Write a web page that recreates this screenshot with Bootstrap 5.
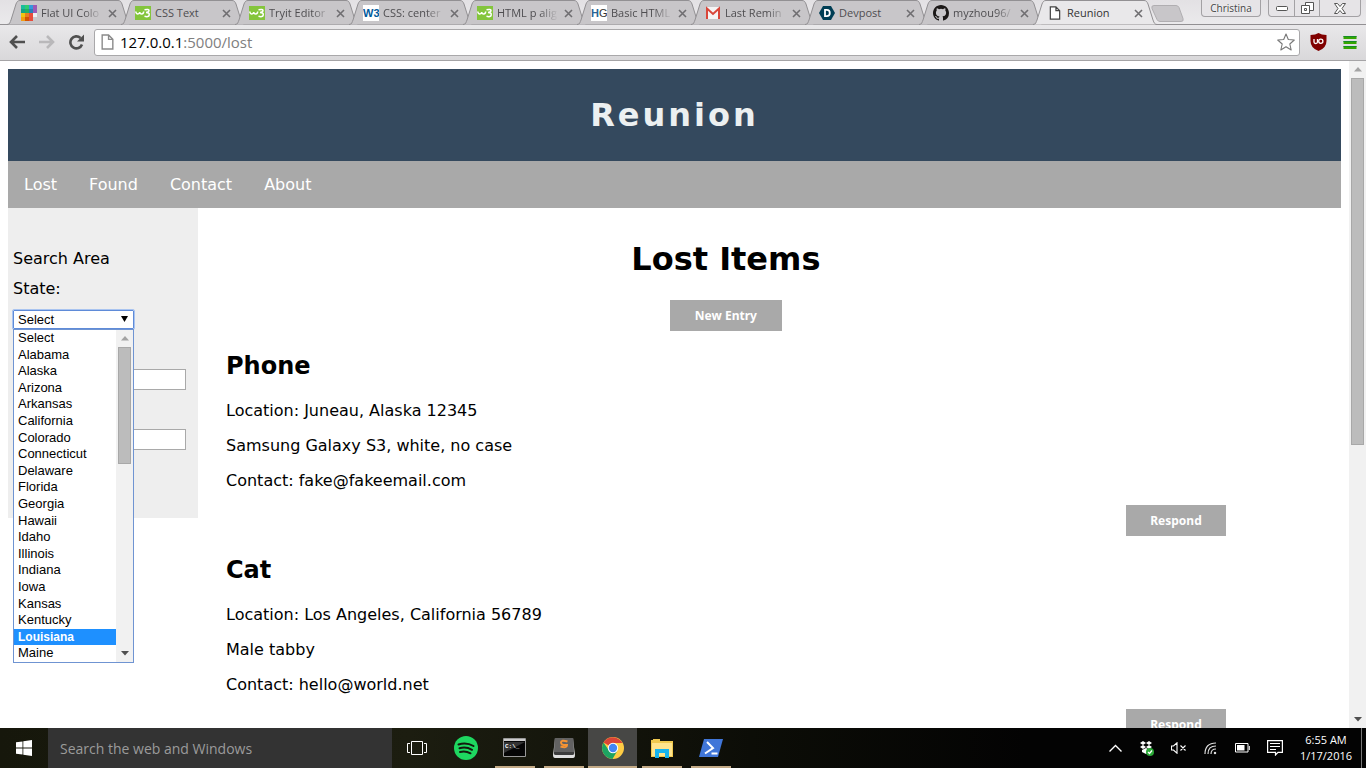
<!DOCTYPE html>
<html lang="en">
<head>
<meta charset="utf-8">
<meta name="viewport" content="width=device-width, initial-scale=1">
<title>Reunion</title>
<link rel="stylesheet" href="https://cdn.jsdelivr.net/npm/bootstrap@5.3.0/dist/css/bootstrap.min.css">
<style>
  :root { --ui: "Open Sans", "Noto Sans", sans-serif; --line: #929093; }
  body { font-family: "DejaVu Sans", sans-serif; font-size: 16px; line-height: 19px; color: #000; background: #fff; }
  button { border: 0; padding: 0; background: none; color: inherit; }
  svg { display: block; flex: none; }

  /* Browser window */
  .tab-strip { height: 25px; padding-left: 7px; background: linear-gradient(#e3e1e4, #ebeaec); font-family: var(--ui); font-size: 11px; line-height: 16px; box-shadow: inset 0 -1px var(--line); }
  .browser-tab { flex: 0 1 124px; height: 25px; min-width: 0; margin-right: -10px; padding: 1px 14px 0 14px; color: #4e4d50; isolation: isolate; }
  .browser-tab .shape { position: absolute; inset: 0; width: 100%; height: 25px; z-index: -1; fill: #c8c6c9; stroke: var(--line); }
  .browser-tab.current { z-index: 2; color: #333; }
  .browser-tab.current .shape { fill: #e9e8ea; }
  .tab-title { flex: 1 1 0; min-width: 0; margin-left: 4px; overflow: hidden; white-space: nowrap; -webkit-mask-image: linear-gradient(90deg, #000 70%, transparent); mask-image: linear-gradient(90deg, #000 70%, transparent); }
  .current .tab-title, .tab-title.whole { -webkit-mask-image: none; mask-image: none; }
  .tab-close { margin-left: 6px; color: #6f6e71; }
  .new-tab { margin: 5px 0 0 4px; align-self: flex-start; }
  .caption-group { height: 17px; border: 1px solid #a3a1a4; border-top: 0; border-radius: 0 0 4px 4px; background: #e6e4e7; }
  .window-buttons { margin: 0 5px 0 7px; }
  .caption-group button { display: flex; align-items: center; justify-content: center; width: 25px; color: #555; }
  .caption-group button + button { border-left: 1px solid #a3a1a4; }
  .caption-group button:last-child { width: 41px; }
  .profile-btn { width: 60px; font-size: 10px; line-height: 15px; color: #444; text-shadow: 0 0 2px #fff; }
  .toolbar { height: 36px; padding: 0 9px 1px 8px; background: linear-gradient(#e9e8ea, #d9d8da); border-bottom: 1px solid #a5a4a6; }
  .omnibox { height: 27px; margin-right: 10px; padding: 0 4px 0 6px; border: 1px solid #a9a8aa; border-radius: 3px; background: #fff; }
  .address { position: relative; height: 25px; margin-left: 6px; font-family: var(--ui); font-size: 15px; line-height: 25px; color: #808080; }
  .address b { font-weight: 400; color: #000; }

  .scroll-track { flex: none; width: 17px; padding: 17px 2px; background: #f1f1f1; }
  .scroll-track .thumb { height: 58%; border: 1px solid #a8a8a8; background: #bcbcbc; }
  .scroll-track .up, .scroll-track .down { position: absolute; left: 5px; }
  .scroll-track .up { top: 6px; } .scroll-track .down { bottom: 6px; }

  /* Reunion page */
  .site { padding: 8px 8px 0; }
  .banner { padding: 27px 0 26px; background: #34495e; }
  .banner h1 { margin: 0; font-size: 32px; line-height: 39px; font-weight: 700; letter-spacing: 3px; color: #ecf0f1; }
  .site-nav { background: #a9a9a9; }
  .site-nav a { padding: 14px 16px; color: #fff; text-decoration: none; }
  .search-area { flex: none; width: 190px; height: 310px; padding: 41px 5px 0; background: #eee; }
  .search-area p { margin: 0 0 11px; }
  .search-area label { display: block; margin: 0 0 12px; }
  .state-picker { width: 121px; height: 20px; }
  .plain-select { appearance: none; display: block; width: 100%; height: 19px; padding: 0 4px; border: 1px solid #5f8bd8; border-radius: 1px; outline: 1px solid #a9c4f0; background: #fff; font: 13px/17px "Liberation Sans", sans-serif; color: #000; }
  .picker-arrow { position: absolute; right: 6px; top: 6px; pointer-events: none; }
  .state-menu { position: absolute; top: 19px; left: 0; z-index: 5; width: 100%; height: 334px; border: 1px solid #6f94d2; background: #fff; font: 13px/16px "Liberation Sans", sans-serif; }
  .state-menu ul { display: grid; grid-auto-rows: 1fr; flex: 1; }
  .state-menu li { padding-left: 4px; }
  .state-menu li.chosen { background: #1e90ff; color: #fff; font-size: 12px; font-weight: 700; }
  .state-menu .thumb { height: 117px; }
  .plain-input { display: block; width: 173px; height: 21px; margin-top: 39px; padding: 1px 3px; border: 1px solid #a9a9a9; background: #fff; font-size: 13px; }
  .listing { width: 75%; margin-left: 28px; padding-top: 32px; }
  .listing h2 { margin: 0 0 21px; font-size: 32px; line-height: 39px; font-weight: 700; text-align: center; }
  .listing-actions { margin-bottom: 21px; }
  .gray-btn { height: 31px; padding: 0 24px; background: #a9a9a9; color: #fff; font-size: 12px; line-height: 31px; font-weight: 700; font-family: "Noto Sans", sans-serif; }
  .listing-actions .gray-btn { padding: 0 25px; }
  .entry + .entry { margin-top: 20px; }
  .entry h3 { margin: 0 0 20px; font-size: 24px; line-height: 29px; font-weight: 700; }
  .entry p { margin: 0 0 16px; }
  .entry p:last-of-type { margin-bottom: 15px; }

  /* Desktop taskbar */
  .taskbar { flex: none; height: 40px; background: linear-gradient(90deg, #16170b, #1c1d10 30%, #0c0d07 55%, #030303 75%); color: #fff; font-family: var(--ui); }
  .start-btn { width: 48px; }
  .desk-search { width: 344px; min-width: 0; padding: 0 12px; border: 0; border-radius: 0; background: #333; color: #fff; font-size: 14px; }
  .desk-search::placeholder { color: #9b9b9b; opacity: 1; }
  .task-btn { display: flex; position: relative; align-items: center; justify-content: center; width: 49px; }
  .task-btn.open::after { content: ""; position: absolute; left: 5px; right: 4px; bottom: 0; height: 2px; background: #c3aa86; }
  .task-btn.front { background: #474745; }
  .task-btn.front::after { left: 0; right: 0; }
  .tray { gap: 17px; }
  .clock { width: 62px; margin-right: 4px; font-size: 11px; line-height: 16px; }
  .show-desktop { width: 5px; border-left: 1px solid #777; }
</style>
</head>
<body class="vh-100 d-flex flex-column overflow-hidden">

<svg width="0" height="0" class="position-absolute" aria-hidden="true">
  <symbol id="tab-shape" viewBox="0 0 124 25" preserveAspectRatio="none"><path d="M0 24.500C3 24.500 3 22 4 20L9 4C10 1.500 11 .5 13 .5H111C113 .5 114 1.500 115 4L120 20C121 23 122 24.500 124 24.500"/></symbol>
  <symbol id="x" viewBox="0 0 9 9"><path d="M1 1l7 7M8 1l-7 7" stroke="currentColor" stroke-width="1.600"/></symbol>
  <symbol id="w3s" viewBox="0 0 16 16"><rect y="1" width="16" height="14" fill="#84c53c"/><path d="M.8 6.500q.3 2.500 2 2.500T4.700 7q.2 2 2 2t2-2.500M9.500 4.800q4.500-1 4.500.7t-3 2q3.700 0 3.200 2.500t-4.700 1.300" fill="none" stroke="#fff" stroke-width="1.500"/></symbol>
  <symbol id="page" viewBox="0 0 12 15"><path d="M1 1h6l4 4v9H1zM7 1v4h4" fill="#fff" stroke="currentColor" stroke-width="1.300"/></symbol>
  <symbol id="tri-up" viewBox="0 0 8 5"><path d="M4 0l4 4.500H0z" fill="#a3a3a3"/></symbol>
  <symbol id="tri-down" viewBox="0 0 8 5"><path d="M0 0h8L4 4.500z" fill="#505050"/></symbol>
</svg>

<header class="flex-shrink-0">
  <div class="tab-strip d-flex">
    <div class="browser-tab position-relative d-flex align-items-center"><svg class="shape"><use href="#tab-shape"/></svg>
      <svg width="16" height="16" viewBox="0 0 16 16"><path fill="#1abc9c" d="M0 0h4v4H0z"/><path fill="#2ecc71" d="M4 0h4v4H4z"/><path fill="#3498db" d="M8 0h4v4H8z"/><path fill="#9b59b6" d="M12 0h4v8h-4z"/><path fill="#16a085" d="M0 4h4v4H0z"/><path fill="#27ae60" d="M4 4h4v4H4z"/><path fill="#2980b9" d="M8 4h4v4H8z"/><path fill="#f1c40f" d="M0 8h4v4H0z"/><path fill="#e67e22" d="M4 8h4v4H4z"/><path fill="#e74c3c" d="M8 8h4v8H8z"/><path fill="#ecf0f1" d="M12 8h4v4h-4z"/><path fill="#f39c12" d="M0 12h4v4H0z"/><path fill="#d35400" d="M4 12h4v4H4z"/></svg>
      <span class="tab-title">Flat UI Colo</span><button class="tab-close" aria-label="Close"><svg width="9" height="9"><use href="#x"/></svg></button></div>
    <div class="browser-tab position-relative d-flex align-items-center"><svg class="shape"><use href="#tab-shape"/></svg>
      <svg width="16" height="16"><use href="#w3s"/></svg>
      <span class="tab-title whole">CSS Text</span><button class="tab-close" aria-label="Close"><svg width="9" height="9"><use href="#x"/></svg></button></div>
    <div class="browser-tab position-relative d-flex align-items-center"><svg class="shape"><use href="#tab-shape"/></svg>
      <svg width="16" height="16"><use href="#w3s"/></svg>
      <span class="tab-title">Tryit Editor</span><button class="tab-close" aria-label="Close"><svg width="9" height="9"><use href="#x"/></svg></button></div>
    <div class="browser-tab position-relative d-flex align-items-center"><svg class="shape"><use href="#tab-shape"/></svg>
      <svg width="16" height="16" viewBox="0 0 16 16"><path fill="#fff" d="M0 0h16v16H0z"/><text x="0" y="12" font-family="Liberation Sans, sans-serif" font-size="11" font-weight="700" fill="#005a9c">W3</text></svg>
      <span class="tab-title">CSS: center</span><button class="tab-close" aria-label="Close"><svg width="9" height="9"><use href="#x"/></svg></button></div>
    <div class="browser-tab position-relative d-flex align-items-center"><svg class="shape"><use href="#tab-shape"/></svg>
      <svg width="16" height="16"><use href="#w3s"/></svg>
      <span class="tab-title">HTML p alig</span><button class="tab-close" aria-label="Close"><svg width="9" height="9"><use href="#x"/></svg></button></div>
    <div class="browser-tab position-relative d-flex align-items-center"><svg class="shape"><use href="#tab-shape"/></svg>
      <svg width="16" height="16" viewBox="0 0 16 16"><path fill="#fff" d="M0 0h16v16H0z"/><text x="0" y="12" font-family="Liberation Sans, sans-serif" font-size="11" fill="#333"><tspan font-weight="700" fill="#2a6496">H</tspan>G</text></svg>
      <span class="tab-title">Basic HTML</span><button class="tab-close" aria-label="Close"><svg width="9" height="9"><use href="#x"/></svg></button></div>
    <div class="browser-tab position-relative d-flex align-items-center"><svg class="shape"><use href="#tab-shape"/></svg>
      <svg width="16" height="16" viewBox="0 0 16 16"><path fill="#f4f4f4" d="M1 2h14v12H1z"/><path d="M2 14V3.500l6 5.500 6-5.500V14" fill="none" stroke="#d9463a" stroke-width="2"/></svg>
      <span class="tab-title">Last Remin</span><button class="tab-close" aria-label="Close"><svg width="9" height="9"><use href="#x"/></svg></button></div>
    <div class="browser-tab position-relative d-flex align-items-center"><svg class="shape"><use href="#tab-shape"/></svg>
      <svg width="16" height="16" viewBox="0 0 16 16"><path fill="#003e54" d="M4 1h8l4 7-4 7H4L0 8z"/><path d="M6 4.800h1.800q3 0 3 3.200t-3 3.200H6z" fill="none" stroke="#fff" stroke-width="1.800"/></svg>
      <span class="tab-title whole">Devpost</span><button class="tab-close" aria-label="Close"><svg width="9" height="9"><use href="#x"/></svg></button></div>
    <div class="browser-tab position-relative d-flex align-items-center"><svg class="shape"><use href="#tab-shape"/></svg>
      <svg width="16" height="16" viewBox="0 0 16 16"><path fill="#1b1817" d="M8 0C3.580 0 0 3.580 0 8c0 3.540 2.290 6.530 5.470 7.590.4.070.55-.17.55-.38 0-.19-.01-.82-.01-1.490-2.010.37-2.530-.49-2.690-.94-.09-.23-.48-.94-.82-1.130-.28-.15-.68-.52-.01-.53.63-.01 1.080.58 1.230.82.72 1.210 1.870.87 2.330.66.07-.52.28-.87.51-1.070-1.780-.2-3.640-.89-3.640-3.950 0-.87.31-1.590.82-2.150-.08-.2-.36-1.020.08-2.120 0 0 .67-.21 2.200.82a7.600 7.600 0 0 1 4 0c1.530-1.040 2.200-.82 2.200-.82.44 1.100.16 1.920.08 2.120.51.56.82 1.270.82 2.150 0 3.070-1.870 3.750-3.650 3.950.29.25.54.73.54 1.480 0 1.070-.01 1.930-.01 2.200 0 .21.15.46.55.38A8 8 0 0 0 16 8c0-4.420-3.580-8-8-8z"/></svg>
      <span class="tab-title">myzhou96/</span><button class="tab-close" aria-label="Close"><svg width="9" height="9"><use href="#x"/></svg></button></div>
    <div class="browser-tab current position-relative d-flex align-items-center"><svg class="shape"><use href="#tab-shape"/></svg>
      <svg width="16" height="14" color="#444"><use href="#page"/></svg>
      <span class="tab-title">Reunion</span><button class="tab-close" aria-label="Close"><svg width="9" height="9"><use href="#x"/></svg></button></div>
    <button class="new-tab" aria-label="New tab"><svg width="33" height="17" viewBox="0 0 33 17"><path d="M3 .5h22q2 0 3 2l4 11q1 3-2 3H9q-2 0-3-2L1 3.500q-1-3 2-3z" fill="#c8c6c9" stroke="#b0aeb1"/></svg></button>
    <button class="caption-group profile-btn ms-auto">Christina</button>
    <div class="caption-group window-buttons d-flex">
      <button aria-label="Minimize"><svg width="12" height="5"><rect x=".5" y=".5" width="11" height="4" rx="1" fill="#fff" stroke="#555"/></svg></button>
      <button aria-label="Restore"><svg width="13" height="12" fill="#fff" stroke="#555"><path d="M4.500.5h8v8h-8z"/><path d="M.5 3.500h8v8h-8zM3.500 6.500h2v2h-2z"/></svg></button>
      <button aria-label="Close window"><svg width="12" height="11" viewBox="0 0 12 11"><path d="M.5.5h3L6 3.500 8.500.5h3L8 5.500l3.500 5h-3L6 7.500l-2.500 3h-3L4 5.500z" fill="#fff" stroke="#555"/></svg></button>
    </div>
  </div>
  <div class="toolbar d-flex align-items-center">
    <button aria-label="Back"><svg width="18" height="16" viewBox="0 0 18 16"><path d="M17 8H4M9 2L3 8l6 6" fill="none" stroke="#505050" stroke-width="2.600"/></svg></button>
    <button aria-label="Forward" class="ms-2 ps-1"><svg width="18" height="16" viewBox="0 0 18 16"><path d="M1 8h13M9 2l6 6-6 6" fill="none" stroke="#b9b8ba" stroke-width="2.600"/></svg></button>
    <button aria-label="Reload" class="ms-2 ps-1 me-2"><svg width="18" height="16" viewBox="0 0 18 16"><path d="M14 10.500A6 6 0 1 1 12.500 4" fill="none" stroke="#505050" stroke-width="2.600"/><path d="M16 .5v7H9z" fill="#505050"/></svg></button>
    <div class="omnibox d-flex align-items-center flex-fill">
      <svg width="13" height="16" color="#8a8a8a"><use href="#page"/></svg>
      <div class="address flex-fill" role="textbox" aria-label="Address"><b>127.0.0.1</b>:5000/lost</div>
      <button aria-label="Bookmark"><svg width="18" height="18" viewBox="0 0 18 18"><path d="M9 1l2.300 5.500 6 .5-4.500 4 1.400 6L9 13.700 3.800 17l1.400-6L.7 7l6-.5z" fill="#fff" stroke="#777" stroke-width="1.100" stroke-linejoin="round"/></svg></button>
    </div>
    <button aria-label="uBlock"><svg width="17" height="18" viewBox="0 0 16 18"><path d="M8 0q3 2 8 2v6q0 7-8 10Q0 15 0 8V2q5 0 8-2z" fill="#800000"/><path d="M3.500 6v3q0 1.500 1.700 1.500T7 9V6" fill="none" stroke="#fff" stroke-width="1.300"/><circle cx="10.300" cy="8.300" r="2.100" fill="none" stroke="#fff" stroke-width="1.300"/></svg></button>
    <button aria-label="Menu" class="ms-3"><svg width="14" height="13" viewBox="0 0 13 13"><path d="M0 1.500h13M0 6.500h13M0 11.500h13" stroke="#35a600" stroke-width="3"/><path d="M0 .5h13M0 5.500h13M0 10.500h13" stroke="#168a2a"/></svg></button>
  </div>
</header>

<div class="d-flex flex-fill overflow-hidden">
  <div class="site flex-fill overflow-hidden">
    <div class="banner text-center"><h1>Reunion</h1></div>
    <nav class="site-nav d-flex">
      <a href="#">Lost</a><a href="#">Found</a><a href="#">Contact</a><a href="#">About</a>
    </nav>
    <div class="d-flex align-items-start">
      <form class="search-area">
        <p>Search Area</p>
        <label for="state">State:</label>
        <div class="state-picker position-relative">
          <select id="state" class="plain-select"><option>Select</option></select>
          <svg class="picker-arrow" width="7" height="6" viewBox="0 0 7 6"><path d="M0 0h7L3.500 6z"/></svg>
          <div class="state-menu d-flex">
            <ul class="list-unstyled mb-0">
              <li>Select</li><li>Alabama</li><li>Alaska</li><li>Arizona</li><li>Arkansas</li><li>California</li><li>Colorado</li><li>Connecticut</li><li>Delaware</li><li>Florida</li><li>Georgia</li><li>Hawaii</li><li>Idaho</li><li>Illinois</li><li>Indiana</li><li>Iowa</li><li>Kansas</li><li>Kentucky</li><li class="chosen">Louisiana</li><li>Maine</li>
            </ul>
            <div class="scroll-track position-relative"><svg class="up" width="8" height="5"><use href="#tri-up"/></svg><div class="thumb"></div><svg class="down" width="8" height="5"><use href="#tri-down"/></svg></div>
          </div>
        </div>
        <input class="plain-input" type="text" aria-label="City">
        <input class="plain-input" type="text" aria-label="Zip">
      </form>
      <main class="listing">
        <h2>Lost Items</h2>
        <div class="listing-actions d-flex justify-content-center"><button class="gray-btn">New Entry</button></div>
        <article class="entry">
          <h3>Phone</h3>
          <p>Location: Juneau, Alaska 12345</p>
          <p>Samsung Galaxy S3, white, no case</p>
          <p>Contact: fake@fakeemail.com</p>
          <div class="d-flex justify-content-end"><button class="gray-btn">Respond</button></div>
        </article>
        <article class="entry">
          <h3>Cat</h3>
          <p>Location: Los Angeles, California 56789</p>
          <p>Male tabby</p>
          <p>Contact: hello@world.net</p>
          <div class="d-flex justify-content-end"><button class="gray-btn">Respond</button></div>
        </article>
      </main>
    </div>
  </div>
  <div class="scroll-track position-relative"><svg class="up" width="8" height="5"><use href="#tri-up"/></svg><div class="thumb"></div><svg class="down" width="8" height="5"><use href="#tri-down"/></svg></div>
</div>

<footer class="taskbar d-flex">
  <button class="start-btn d-flex align-items-center justify-content-center" aria-label="Start"><svg width="16" height="16" viewBox="0 0 16 16" fill="#fff"><path d="M0 2.300L6.500 1.400v6.200H0zM7.300 1.300L16 0v7.600H7.300zM0 8.400h6.500v6.200L0 13.700zM7.300 8.400H16V16l-8.700-1.300z"/></svg></button>
  <input class="desk-search" type="search" placeholder="Search the web and Windows" aria-label="Search the web and Windows">
  <button class="task-btn" aria-label="Task view"><svg width="20" height="14" viewBox="0 0 20 14" fill="none" stroke="#fff"><path d="M4.500.5h11v13h-11zM3 2.500H.5v9H3M17 2.500h2.500v9H17"/></svg></button>
  <button class="task-btn" aria-label="Spotify"><svg width="24" height="24" viewBox="0 0 24 24"><circle cx="12" cy="12" r="12" fill="#1ed760"/><path d="M4.500 8.500q8-2.500 15 1.500M5.500 12.300q6.500-2 12.500 1.500M6 16q5.500-1.500 10.500 1.300" fill="none" stroke="#14190d" stroke-width="2" stroke-linecap="round"/></svg></button>
  <button class="task-btn open" aria-label="Command Prompt"><svg width="23" height="20" viewBox="0 0 23 20"><path d="M.5.5h22v18H.5z" fill="#050505" stroke="#999"/><path d="M1 1h21v2H1z" fill="#ccc"/><path d="M1 4h21L1 15z" fill="#333"/><text x="2" y="10" font-family="Liberation Mono, monospace" font-size="6" font-weight="700" fill="#fff">C:\_</text></svg></button>
  <button class="task-btn open" aria-label="Sublime Text"><svg width="22" height="20" viewBox="0 0 22 20"><path d="M2 1h18l2 16q0 3-2 3H2q-2 0-2-3z" fill="#e0e0e0"/><path d="M2.500 0h17q1 0 1 1l.5 13H1L1.500 1q0-1 1-1z" fill="#626262"/><path d="M1 14h20v1.500q0 1.500-1.500 1.500h-17Q1 17 1 15.500z" fill="#3c3c3c"/><path d="M14.500 3.500q-6.500-2-6.500 1t6 2.500q0 3.500-6.500 1.500" fill="none" stroke="#f79432" stroke-width="2"/></svg></button>
  <button class="task-btn open front" aria-label="Chrome"><svg width="22" height="22" viewBox="0 0 22 22"><circle cx="11" cy="11" r="11" fill="#fc4"/><path d="M11 11L1.500 5.500A11 11 0 0 1 20.500 6H11z" fill="#db4437"/><path d="M1.500 5.500A11 11 0 0 0 10.500 22L15.500 13.500H7z" fill="#1da462"/><circle cx="11" cy="11" r="5.200" fill="#fff"/><circle cx="11" cy="11" r="4.200" fill="#4285f4"/></svg></button>
  <button class="task-btn open" aria-label="File Explorer"><svg width="22" height="19" viewBox="0 0 22 19"><path d="M0 1h2V0h7v2h13v16H0z" fill="#f0c94f"/><path d="M1 4h20v13H1z" fill="#ffe48d"/><path d="M4 10h14v9h-4v-5H8v5H4z" fill="#18b4ee"/></svg></button>
  <button class="task-btn open" aria-label="PowerShell"><svg width="24" height="18" viewBox="0 0 24 18"><path d="M5 0h19l-5 18H0z" fill="#4076d8"/><path d="M8 3l6 6-8 5.500M12.500 14.500h6" fill="none" stroke="#fff" stroke-width="2"/></svg></button>

  <div class="tray d-flex align-items-center ms-auto me-2 pe-1">
    <svg width="13" height="8" viewBox="0 0 13 8"><path d="M.5 7.500l6-6 6 6" fill="none" stroke="#fff" stroke-width="1.400"/></svg>
    <svg width="15" height="15" viewBox="0 0 15 15"><path fill="#fff" d="M4 0l3 2-3 2-3-2zM10 0l3 2-3 2-3-2zM4 4l3 2-3 2-3-2zM10 4l3 2-3 2-3-2zM3 9l4-2 4 2v2l-4 2-4-2z"/><circle cx="11" cy="11" r="4" fill="#2aa836"/><path d="M9 11l1.500 1.500L13 9.500" fill="none" stroke="#fff" stroke-width="1.200"/></svg>
    <svg width="16" height="12" viewBox="0 0 16 12" fill="none" stroke="#fff"><path d="M.5 4h2L6 .8v10.400L2.500 8h-2zM9.500 3.500l5 5M14.500 3.500l-5 5" stroke-width="1.100"/></svg>
    <svg width="14" height="13" viewBox="0 0 14 13" fill="none" stroke="#ddd" stroke-width="1.200"><path d="M1 12Q1 1 12 1M4 12q0-8 8-8M7 12q0-5 5-5"/><path d="M10.500 10.500h1v1h-1z" fill="#fff"/></svg>
    <svg width="15" height="10" viewBox="0 0 15 10"><path d="M.5.5h12.500v8.500H.5zM14.300 3v4" fill="none" stroke="#fff"/><path d="M2 2h7.500v5.500H2z" fill="#fff"/></svg>
    <svg width="16" height="16" viewBox="0 0 16 16" fill="none" stroke="#fff"><path d="M.6.6h14.800v11.800H11L8.500 15v-2.600H.6zM3 3.500h10M3 6.500h10M3 9.500h6" stroke-width="1.200"/></svg>
  </div>
  <div class="clock d-flex flex-column justify-content-center text-center"><span>6:55 AM</span><span>1/17/2016</span></div>
  <button class="show-desktop" aria-label="Show desktop"></button>
</footer>

<script src="https://cdn.jsdelivr.net/npm/bootstrap@5.3.0/dist/js/bootstrap.bundle.min.js"></script>
</body>
</html>
